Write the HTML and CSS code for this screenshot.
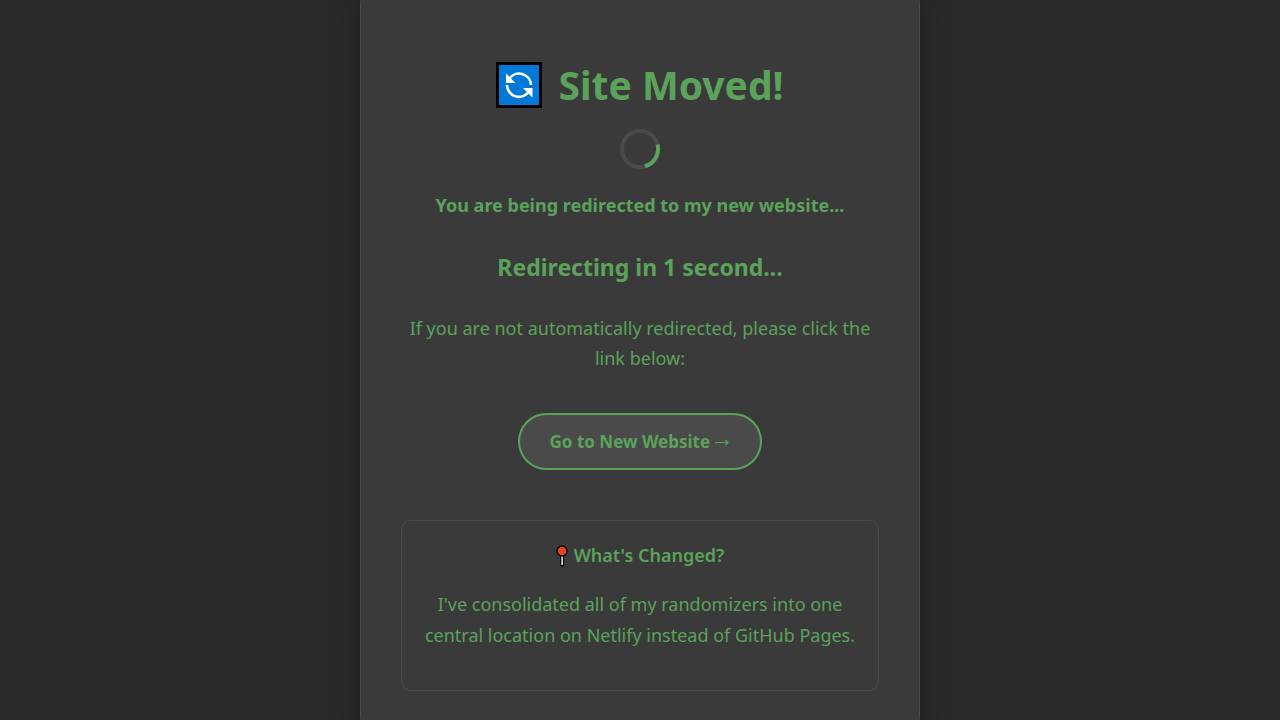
FILE: index.html
```html
<!DOCTYPE html>
<html lang="en">
<head>
<meta charset="utf-8">
<meta name="viewport" content="width=device-width, initial-scale=1">
<title>Site Moved!</title>
<link rel="stylesheet" href="styles.css">
</head>
<body>
<main class="card">
  <h1 class="title">
    <svg class="title-icon" viewBox="0 0 46 46" aria-hidden="true">
      <rect width="46" height="46" fill="#000"/>
      <rect x="3" y="3" width="40" height="40" fill="#0078d7"/>
      <g fill="none" stroke="#fff" stroke-width="2.6">
        <path d="M13 17A12 12 0 0 1 35 23"/>
        <path d="M11 23A12 12 0 0 0 33 29.500"/>
      </g>
      <path d="M10 11.500v9.500h9.500zM36.500 35.500v-9.500h-9.500z" fill="#fff"/>
    </svg>
    <span>Site Moved!</span>
  </h1>
  <div class="spinner" role="status" aria-label="Redirecting">
    <svg viewBox="0 0 40 40" aria-hidden="true">
      <circle cx="20" cy="20" r="18" fill="none" stroke="#4a4a4a" stroke-width="4"/>
      <path d="M37.5 15.500A18 18 0 0 1 24.900 37.300" fill="none" stroke="#5ba35b" stroke-width="4"/>
    </svg>
  </div>
  <p class="message">You are being redirected to my new website...</p>
  <p class="countdown">Redirecting in 1 second...</p>
  <p class="fallback">If you are not automatically redirected, please click the link below:</p>
  <a class="go-link" href="#">Go to New Website <svg class="arrow" viewBox="0 0 16 12" aria-hidden="true"><path d="M1 6.500h13M11.500 4l2.500 2.500L11.500 9" fill="none" stroke="currentColor" stroke-width="1.200"/></svg></a>
  <section class="info">
    <h2 class="info-title">
      <svg class="pin" viewBox="0 0 12 22" aria-hidden="true">
        <rect x="4" y="9" width="4" height="12.500" rx="1" fill="#000"/>
        <rect x="5.200" y="10" width="1.800" height="10" fill="#ccc"/>
        <circle cx="6" cy="6" r="5" fill="#e8431b" stroke="#000" stroke-width="1.300"/>
      </svg>
      <span>What's Changed?</span>
    </h2>
    <p class="info-text">I've consolidated all of my randomizers into one central location on Netlify instead of GitHub Pages.</p>
  </section>
</main>
</body>
</html>
```
FILE: styles.css
```css
* {
  box-sizing: border-box;
  margin: 0;
}

body {
  display: flex;
  align-items: center;
  justify-content: center;
  height: 100vh;
  overflow: hidden;
  background: #2a2a2a;
  color: #5ba35b;
  font: 18px/31px "Segoe UI", "Noto Sans", sans-serif;
  text-align: center;
}

.card {
  display: flex;
  flex-direction: column;
  align-items: center;
  flex: 0 1 560px;
  padding: 64px 40px 40px;
  background: #3a3a3a;
  border: 1px solid #4a4a4a;
  border-radius: 15px;
  box-shadow: 0 8px 32px rgba(0, 0, 0, 0.3);
}

.title {
  display: flex;
  align-items: center;
  gap: 16px;
  margin-bottom: 12px;
  font-size: 39px;
  line-height: 64px;
}

.title-icon {
  width: 46px;
  height: 46px;
}

.spinner {
  width: 40px;
  height: 40px;
  margin-bottom: 21px;
}

.spinner svg,
.title-icon,
.pin {
  display: block;
}

.message {
  margin-bottom: 27px;
  font-weight: 700;
}

.countdown {
  margin-bottom: 27px;
  font-size: 23px;
  font-weight: 700;
  line-height: 38px;
}

.fallback {
  margin-bottom: 40px;
  line-height: 30px;
}

.go-link {
  margin-bottom: 50px;
  padding: 11px 30px;
  background: #4a4a4a;
  border: 2px solid #5ba35b;
  border-radius: 50px;
  color: inherit;
  font-size: 17px;
  font-weight: 700;
  text-decoration: none;
}

.arrow {
  width: 16px;
  height: 12px;
}

.info {
  align-self: stretch;
  padding: 19px 20px 39px;
  border: 1px solid #4a4a4a;
  border-radius: 10px;
}

.info-title {
  display: flex;
  align-items: center;
  justify-content: center;
  gap: 6px;
  margin-bottom: 18px;
  font-size: 18px;
  font-weight: 600;
}

.pin {
  width: 12px;
  height: 22px;
}
```
